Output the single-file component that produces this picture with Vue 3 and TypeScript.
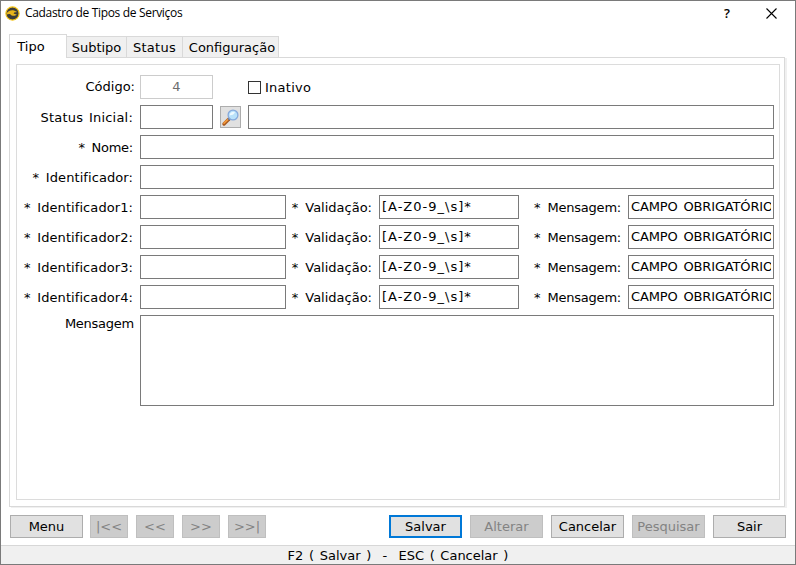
<script setup lang="ts">
import { ref } from 'vue'

interface IdentifierRow {
  id: number
  value: string
  validation: string
  message: string
}

interface Action {
  label: string
  disabled?: boolean
  primary?: boolean
}

const tabs = ['Tipo', 'Subtipo', 'Status', 'Configuração']
const activeTab = ref('Tipo')

const identifiers = ref<IdentifierRow[]>(
  [1, 2, 3, 4].map((id) => ({
    id,
    value: '',
    validation: '[A-Z0-9_\\s]*',
    message: 'CAMPO OBRIGATÓRIO',
  })),
)

const navigation = ['|<<', '<<', '>>', '>>|']
const actions: Action[] = [
  { label: 'Salvar', primary: true },
  { label: 'Alterar', disabled: true },
  { label: 'Cancelar' },
  { label: 'Pesquisar', disabled: true },
  { label: 'Sair' },
]
</script>

<template>
  <main class="window">
    <header class="titlebar">
      <svg class="app-icon" viewBox="0 0 15 15">
        <circle cx="7.5" cy="7.5" r="6.6" fill="#3d3d3a" stroke="#f4c416" stroke-width="1.2" />
        <path d="M1.6 7.2C3.4 4.6 6.2 3.6 9 4.4L12.2 5.9 9.2 6.6 8.6 7.4 11.9 8.7 9.6 9.8C7.6 10 6 9.2 5.4 8.2 4.2 7.6 2.8 7.9 1.7 8.6Z" fill="#e9b51b" />
      </svg>
      <h1 class="title">Cadastro de Tipos de Serviços</h1>
      <span class="help">?</span>
      <svg class="close" viewBox="0 0 11 11"><path d="M.5.5 10.5 10.5M10.5.5.5 10.5" stroke="#000" stroke-width="1.1" /></svg>
    </header>

    <nav class="tabs">
      <button
        v-for="tab in tabs"
        :key="tab"
        class="tab"
        :class="[{ active: tab === activeTab }, 'tab-' + tab.slice(0, 3).toLowerCase()]"
        @click="activeTab = tab"
      >{{ tab }}</button>
    </nav>

    <section class="page">
      <div class="form">
        <div class="row">
          <span class="label code-label">Código:</span>
          <div class="field short disabled">4</div>
          <label class="check"><span class="box"></span><span class="t-inativo">Inativo</span></label>
        </div>
        <div class="row">
          <span class="label"><span class="t-status">Status Inicial:</span></span>
          <div class="field short"></div>
          <button class="lookup">
            <svg viewBox="0 0 19 19">
              <path d="M3 16 8 11" stroke="#a85a20" stroke-width="3.4" stroke-linecap="round" />
              <path d="M3 15.2 7.5 10.8" stroke="#f49a3c" stroke-width="1.7" stroke-linecap="round" />
              <path d="M7.2 11.8 8.5 10.5" stroke="#6b7fa0" stroke-width="2.2" />
              <circle cx="12" cy="7" r="4.9" fill="#b9e1fa" stroke="#86a9dc" stroke-width="1.3" />
              <path d="M8.7 7.2A3.5 3.5 0 0 1 14 4.2C13 6.5 11.5 7.4 8.7 7.2Z" fill="#edf9ff" />
            </svg>
          </button>
          <div class="field grow"></div>
        </div>
        <div class="row">
          <span class="label"><span class="t-nome">* Nome:</span></span>
          <div class="field grow"></div>
        </div>
        <div class="row">
          <span class="label"><span class="t-ident">* Identificador:</span></span>
          <div class="field grow"></div>
        </div>
        <div v-for="row in identifiers" :key="row.id" class="row">
          <span class="label"><span class="t-ident">* Identificador{{ row.id }}:</span></span>
          <div class="field medium">{{ row.value }}</div>
          <span class="label validation-label"><span class="t-valid">* Validação:</span></span>
          <div class="field validation"><span class="t-regex">{{ row.validation }}</span></div>
          <span class="label message-label"><span class="t-msg">* Mensagem:</span></span>
          <div class="field medium"><span class="clip">{{ row.message }}</span></div>
        </div>
        <div class="row memo-row">
          <span class="label memo-label"><span class="t-memo">Mensagem</span></span>
          <div class="field memo"></div>
        </div>
      </div>
    </section>

    <div class="toolbar">
      <button class="btn menu">Menu</button>
      <button v-for="item in navigation" :key="item" class="btn nav" disabled>{{ item }}</button>
      <div class="actions">
        <button
          v-for="action in actions"
          :key="action.label"
          class="btn"
          :class="{ primary: action.primary }"
          :disabled="action.disabled"
        >{{ action.label }}</button>
      </div>
    </div>

    <footer class="statusbar">F2 ( Salvar )&nbsp; -&nbsp; ESC ( Cancelar )</footer>
  </main>
</template>

<style>
body {
  background: #fff;
}
</style>

<style scoped>
* {
  box-sizing: border-box;
}

.window {
  display: flex;
  flex-direction: column;
  width: 796px;
  height: 565px;
  overflow: hidden;
  border: 1px solid #7a7a7a;
  background: #fff;
  color: #000;
  font: 13px/16px Verdana, 'DejaVu Sans', sans-serif;
}

.window > * {
  flex: none;
}

button {
  padding: 0;
  border-radius: 0;
  color: inherit;
  font: inherit;
}

.titlebar {
  display: flex;
  align-items: center;
  height: 33px;
  padding: 0 18px 9px 4px;
}

.app-icon {
  width: 15px;
  height: 15px;
}

.title {
  flex: 1;
  margin: 0 0 0 5px;
  font: 12px/16px 'Segoe UI', 'Open Sans', sans-serif;
  letter-spacing: -0.33px;
}

.help {
  margin-right: 36px;
  font: 600 13px/16px 'Open Sans', sans-serif;
}

.close {
  width: 11px;
  height: 11px;
}

.tabs {
  display: flex;
  align-items: flex-end;
  height: 23px;
  padding-left: 8px;
}

.tab {
  height: 21px;
  padding-top: 2px;
  border: 1px solid #d9d9d9;
  border-width: 1px 1px 0 0;
  background: #f0f0f0;
  white-space: nowrap;
}

.tab.active {
  position: relative;
  z-index: 1;
  width: 58px;
  height: 24px;
  margin-bottom: -1px;
  padding: 0 14px 0 0;
  border-left-width: 1px;
  background: #fff;
}

.tab-sub {
  width: 60px;
}

.tab-sta {
  width: 56px;
  letter-spacing: 0.3px;
}

.tab-con {
  width: 96px;
  padding-left: 3px;
}

.page {
  width: 776px;
  height: 450px;
  margin-left: 8px;
  padding: 6px 4px 6px 6px;
  border: 1px solid #d9d9d9;
  box-shadow: 2px 1px 0 #f0f0f0;
}

.form {
  display: flex;
  flex-direction: column;
  gap: 6px;
  height: 436px;
  padding: 10px 5px 0 0;
  border: 1px solid #dcdcdc;
}

.row {
  display: flex;
  height: 24px;
}

.label {
  flex: none;
  width: 123px;
  padding: 5px 7px 0 0;
  text-align: right;
  white-space: nowrap;
}

.code-label {
  padding: 4px 5px 0 0;
}

.t-inativo {
  letter-spacing: 0.25px;
}

.t-status {
  letter-spacing: 0.2px;
  word-spacing: 1.5px;
}

.t-nome {
  letter-spacing: -0.25px;
  word-spacing: 3px;
}

.t-ident {
  letter-spacing: 0.08px;
  word-spacing: 2.5px;
}

.t-valid {
  word-spacing: 3px;
}

.t-msg {
  letter-spacing: -0.22px;
  word-spacing: 3.3px;
}

.t-memo {
  letter-spacing: -0.25px;
}

.t-regex {
  letter-spacing: 1px;
}

.field {
  flex: none;
  height: 24px;
  padding: 3px 2px;
  border: 1px solid #7a7a7a;
  white-space: nowrap;
}

.short {
  width: 73px;
}

.medium {
  width: 146px;
}

.validation {
  width: 140px;
}

.grow {
  flex: 1;
}

.disabled {
  border-color: #ccc;
  color: #6d6d6d;
  text-align: center;
}

.clip {
  display: block;
  overflow: hidden;
  letter-spacing: -0.15px;
  word-spacing: 2px;
}

.check {
  display: flex;
  align-items: center;
  margin-left: 35px;
  padding-top: 1px;
}

.box {
  width: 13px;
  height: 13px;
  margin-right: 4px;
  border: 1px solid #333;
}

.lookup {
  width: 21px;
  height: 22px;
  margin: 1px 7px 0;
  border: 1px solid #adadad;
  background: #e1e1e1;
}

.lookup svg {
  display: block;
  width: 19px;
  height: 19px;
}

.validation-label {
  width: 93px;
}

.message-label {
  width: 109px;
}

.memo-row {
  height: 91px;
}

.memo-label {
  padding: 1px 6px 0 0;
}

.memo {
  width: 634px;
  height: 91px;
}

.toolbar {
  display: flex;
  height: 38px;
  padding: 8px 9px 0;
}

.btn {
  width: 73px;
  height: 23px;
  border: 1px solid #adadad;
  background: #e1e1e1;
  white-space: nowrap;
}

.btn.menu {
  margin-right: 7px;
}

.btn.nav {
  width: 38px;
  margin-right: 8px;
}

.btn:disabled {
  border-color: #bfbfbf;
  background: #ccc;
  color: #838383;
}

.btn.primary {
  border: 2px solid #0078d7;
}

.actions {
  display: flex;
  gap: 8px;
  margin-left: auto;
}

.statusbar {
  height: 19px;
  border-top: 1px solid #d7d7d7;
  background: #f0f0f0;
  line-height: 19px;
  text-align: center;
  white-space: nowrap;
  word-spacing: 1.5px;
}
</style>
